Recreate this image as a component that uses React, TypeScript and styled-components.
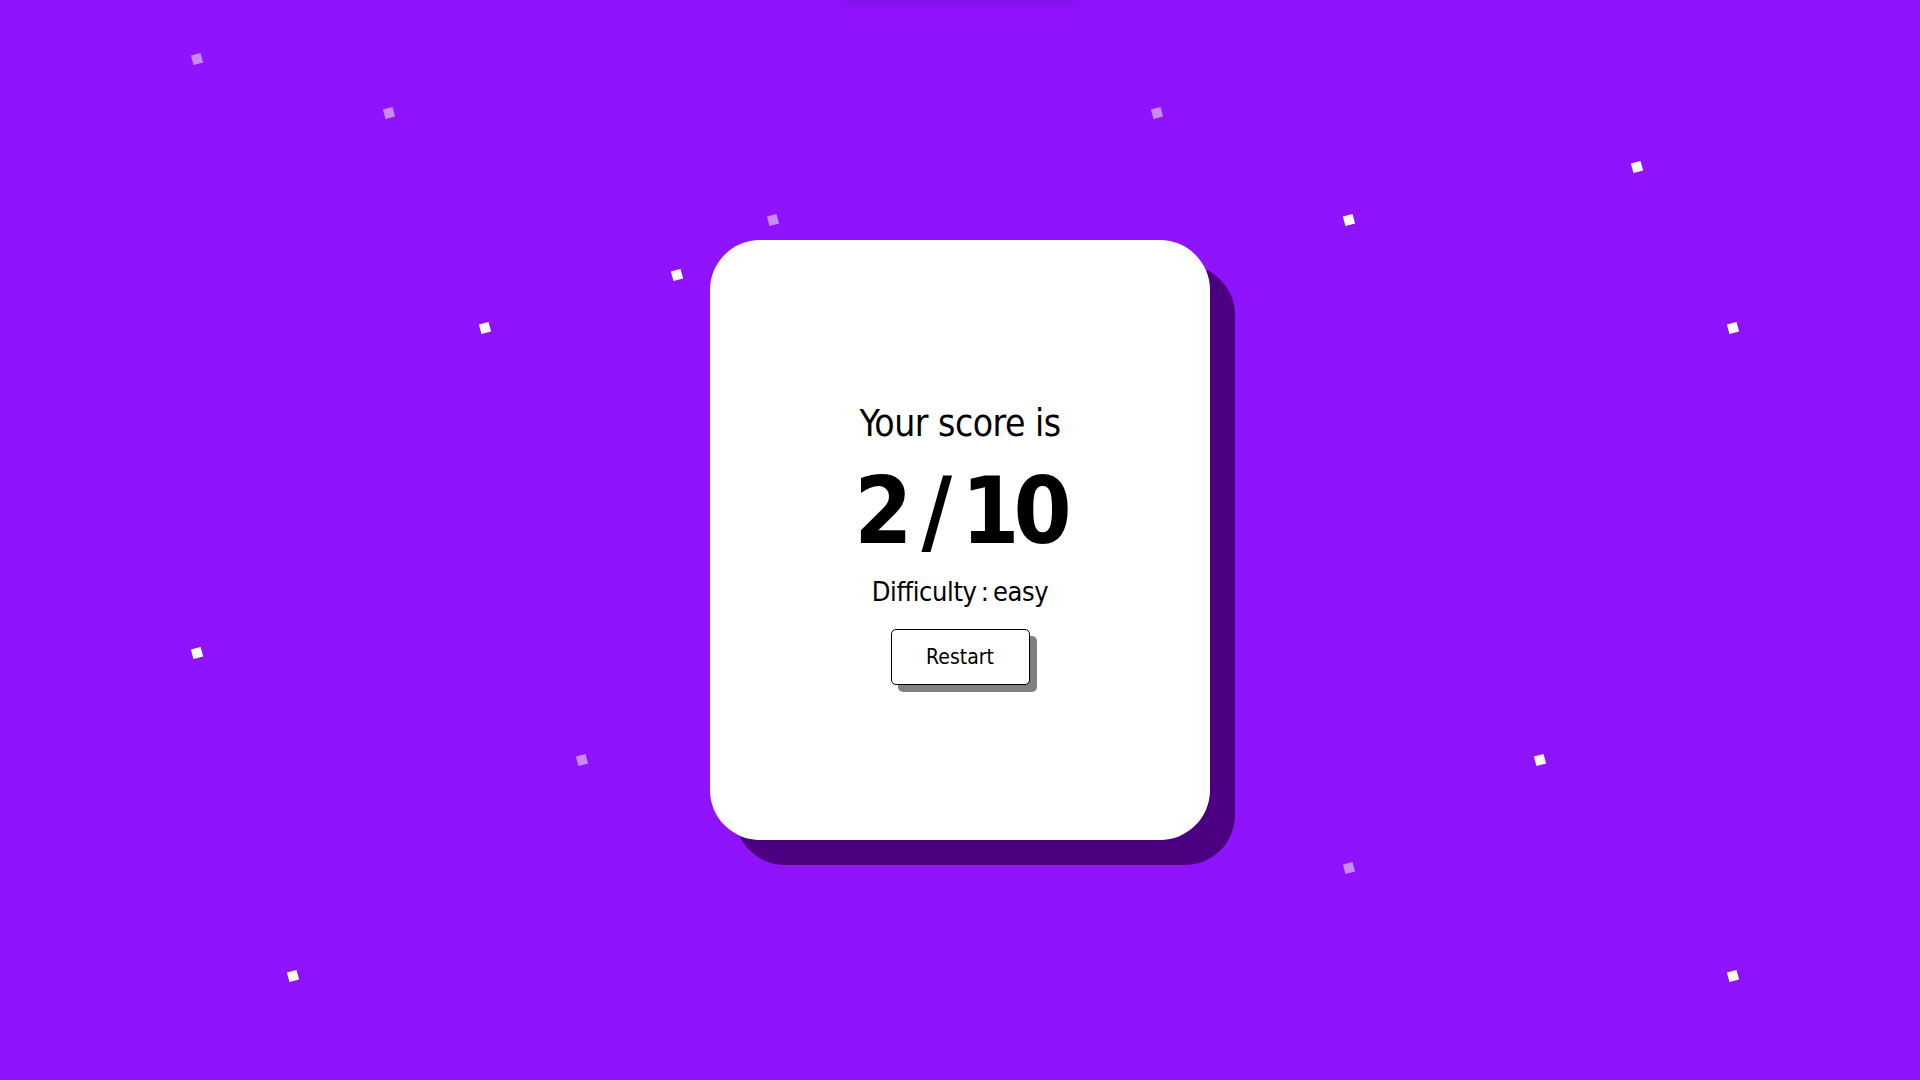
import React from "react";
import styled, { createGlobalStyle } from "styled-components";

const GlobalStyle = createGlobalStyle`
  html, body {
    margin: 0;
    padding: 0;
    width: 100%;
    height: 100%;
    overflow: hidden;
    background: #9013fe;
  }
  #root {
    width: 100%;
    height: 100%;
  }
`;

const FONT = `"DejaVu Sans Condensed", "DejaVu Sans", sans-serif`;

const Page = styled.main`
  position: relative;
  width: 100vw;
  height: 100vh;
  background: #9013fe;
  display: flex;
  align-items: center;
  justify-content: center;
  overflow: hidden;
  font-family: ${FONT};
  font-stretch: condensed;
`;

const TopGlow = styled.div`
  position: absolute;
  top: -40px;
  left: 835px;
  width: 250px;
  height: 40px;
  border-radius: 20px;
  box-shadow: 0 0 14px rgba(40, 0, 80, 0.25);
`;

const Particle = styled.span<{ $faded?: boolean }>`
  position: absolute;
  width: 10px;
  height: 10px;
  margin: -5px 0 0 -5px;
  background: #ffffff;
  opacity: ${(p) => (p.$faded ? 0.5 : 1)};
  transform: rotate(-15deg);
`;

const Card = styled.section`
  box-sizing: border-box;
  width: 500px;
  height: 600px;
  padding-top: 10px;
  background: #ffffff;
  border-radius: 50px;
  box-shadow: 25px 25px 0 #4b0082;
  display: flex;
  flex-direction: column;
  align-items: center;
  justify-content: center;
  color: #000;
  z-index: 1;
`;

const Title = styled.h2`
  margin: 0;
  font-size: 37px;
  line-height: 1;
  font-weight: 400;
  font-stretch: condensed;
  letter-spacing: -0.5px;
`;

const Score = styled.h1`
  margin: 23px 0 0;
  font-size: 93px;
  line-height: 1;
  font-weight: 700;
  font-stretch: condensed;
  letter-spacing: -6px;
  word-spacing: -8px;
`;

const Difficulty = styled.p`
  margin: 20px 0 0;
  font-size: 27px;
  line-height: 1;
  font-stretch: condensed;
  letter-spacing: -0.4px;
  word-spacing: -3px;
`;

const RestartButton = styled.button`
  margin-top: 24px;
  width: 139px;
  height: 56px;
  background: #ffffff;
  border: 1px solid #000;
  border-radius: 5px;
  box-shadow: 7px 7px 0 #808080;
  font-family: ${FONT};
  font-stretch: condensed;
  font-size: 21px;
  color: #000;
  cursor: pointer;
  padding: 0;
`;

const particles: { x: number; y: number; faded?: boolean }[] = [
  { x: 197, y: 59, faded: true },
  { x: 389, y: 113, faded: true },
  { x: 773, y: 220, faded: true },
  { x: 677, y: 275 },
  { x: 485, y: 328 },
  { x: 1157, y: 113, faded: true },
  { x: 1637, y: 167 },
  { x: 1349, y: 220 },
  { x: 1733, y: 328 },
  { x: 197, y: 653 },
  { x: 582, y: 760, faded: true },
  { x: 1540, y: 760 },
  { x: 1349, y: 868, faded: true },
  { x: 293, y: 976 },
  { x: 1733, y: 976 },
];

export default function App() {
  return (
    <>
      <GlobalStyle />
      <Page>
        <TopGlow />
        {particles.map((p, i) => (
          <Particle key={i} $faded={p.faded} style={{ left: p.x, top: p.y }} />
        ))}
        <Card>
          <Title>Your score is</Title>
          <Score>2 / 10</Score>
          <Difficulty>Difficulty : easy</Difficulty>
          <RestartButton>Restart</RestartButton>
        </Card>
      </Page>
    </>
  );
}
